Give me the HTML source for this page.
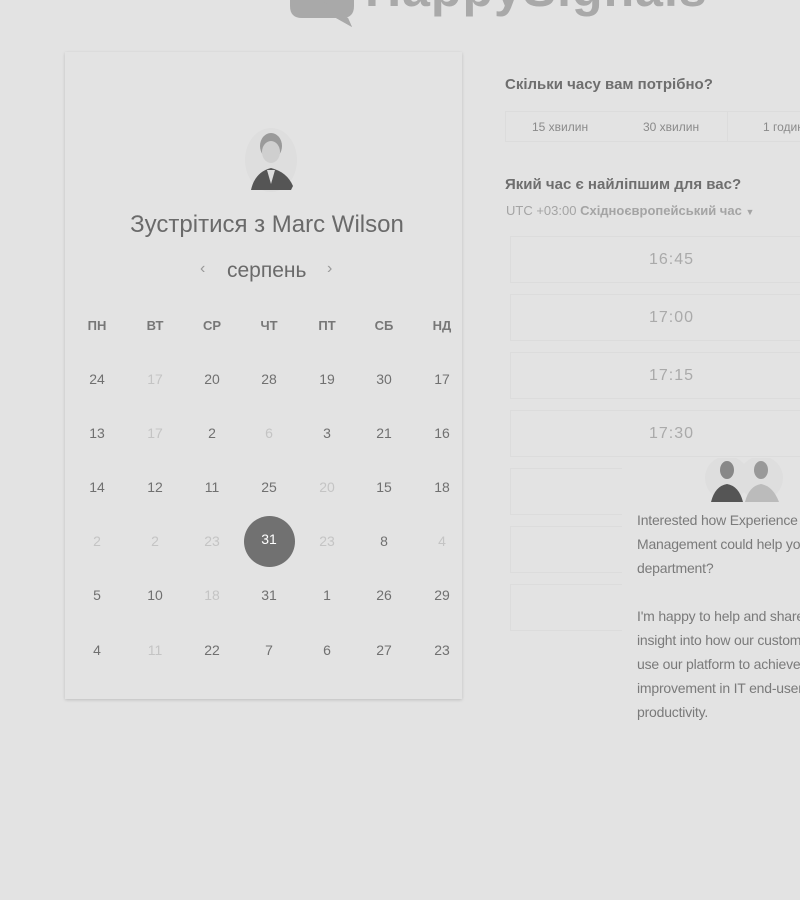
<!DOCTYPE html>
<html><head><meta charset="utf-8"><style>
body{margin:0;width:800px;height:900px;background:#e3e3e3;font-family:"Liberation Sans",sans-serif;position:relative;overflow:hidden}
.a{position:absolute}
.logo{left:365px;top:-40px;font-size:50px;font-weight:bold;color:#a9a9a9;letter-spacing:1px;white-space:nowrap}
.card{left:65px;top:52px;width:397px;height:647px;background:#e3e3e3;box-shadow:0 1px 3px rgba(0,0,0,.16)}
.day{position:absolute;width:40px;text-align:center;font-size:14px;color:#707070;transform:translateX(-20px)}
.dim{color:#c4c4c4}
.hd{font-weight:bold;font-size:13px;color:#777}
.slot{position:absolute;left:510px;width:300px;height:47px;border:1px solid #dcdcdc;border-right:none;box-sizing:border-box;text-align:center;line-height:46px;color:#aaa;font-size:16px;letter-spacing:1px}
.slot span{position:absolute;left:138px}
.pop{left:622px;top:458px;width:200px;height:300px;background:#e3e3e3}
.ptxt{left:637px;top:508px;width:200px;font-size:14px;line-height:24px;color:#7a7a7a;white-space:nowrap;letter-spacing:-0.2px}
</style></head><body>
<svg class="a" style="left:280px;top:-20px" width="80" height="50"><path d="M10 0 H62 Q74 0 74 12 V26 Q74 38 62 38 H68 L72 47 L56 38 H22 Q10 38 10 26 Z" fill="#a9a9a9"/><path d="M12 0 Q10 28 26 38 H56 L72 47 L68 38" fill="#a9a9a9"/></svg>
<div class="a logo">HappySignals</div>
<div class="a card"></div>
<svg class="a" style="left:239px;top:124px" width="64" height="68"><ellipse cx="32" cy="36" rx="26" ry="32" fill="#dedede"/><ellipse cx="32" cy="22" rx="11" ry="13" fill="#9a9a9a"/><ellipse cx="32" cy="28" rx="9" ry="11" fill="#cfcfcf"/><path d="M12 66 Q16 48 32 44 Q48 48 54 62 L52 66Z" fill="#555"/><path d="M28 46 L32 60 L36 46Z" fill="#ddd"/></svg>
<div class="a" style="left:65px;width:404px;top:211px;text-align:center;font-size:24px;color:#6a6a6a">Зустрітися з Marc Wilson</div>
<div class="a" style="left:200px;top:260px;font-size:16px;color:#999">‹</div>
<div class="a" style="left:227px;top:259px;font-size:21px;color:#6a6a6a">серпень</div>
<div class="a" style="left:327px;top:260px;font-size:16px;color:#999">›</div>
<div class="a" style="left:244px;top:516px;width:51px;height:51px;border-radius:50%;background:#717171"></div>
<div id="cal"></div>
<div class="a" style="left:505px;top:76px;font-size:15px;font-weight:bold;color:#6e6e6e">Скільки часу вам потрібно?</div>
<div class="a" style="left:505px;top:111px;width:310px;height:31px;border:1px solid #dcdcdc;box-sizing:border-box"></div>
<div class="a" style="left:727px;top:111px;width:1px;height:31px;background:#dcdcdc"></div>
<div class="a" style="left:532px;top:120px;font-size:12px;color:#8a8a8a">15 хвилин</div>
<div class="a" style="left:643px;top:120px;font-size:12px;color:#8a8a8a">30 хвилин</div>
<div class="a" style="left:763px;top:120px;font-size:12px;color:#8a8a8a;white-space:nowrap">1 година</div>
<div class="a" style="left:505px;top:176px;font-size:15px;font-weight:bold;color:#6e6e6e">Який час є найліпшим для вас?</div>
<div class="a" style="left:506px;top:203px;font-size:13px;color:#a4a4a4;white-space:nowrap">UTC +03:00 <b>Східноєвропейський час</b> <span style="font-size:9px">▼</span></div>
<div class="slot" style="top:236px"><span>16:45</span></div>
<div class="slot" style="top:294px"><span>17:00</span></div>
<div class="slot" style="top:352px"><span>17:15</span></div>
<div class="slot" style="top:410px"><span>17:30</span></div>
<div class="slot" style="top:468px"></div>
<div class="slot" style="top:526px"></div>
<div class="slot" style="top:584px"></div>
<div class="a pop"></div>
<svg class="a" style="left:705px;top:458px" width="80" height="46"><circle cx="22" cy="20" r="22" fill="#dedede"/><circle cx="56" cy="20" r="22" fill="#dedede"/><ellipse cx="22" cy="12" rx="7" ry="9" fill="#888"/><path d="M6 44 Q10 28 22 26 Q34 28 38 44Z" fill="#555"/><ellipse cx="56" cy="12" rx="7" ry="9" fill="#999"/><path d="M40 44 Q44 28 56 26 Q68 28 74 44Z" fill="#bbb"/></svg>
<div class="a ptxt">Interested how Experience<br>Management could help your<br>department?<br><br>I'm happy to help and share<br>insight into how our customers<br>use our platform to achieve<br>improvement in IT end-user<br>productivity.</div>
<script>
var xs=[97,155,212,269,327,384,442],ys=[379,433,487,541,595,650];
var h=["ПН","ВТ","СР","ЧТ","ПТ","СБ","НД"];
var d=[["24","17d","20","28","19","30","17"],["13","17d","2","6d","3","21","16"],["14","12","11","25","20d","15","18"],["2d","2d","23d","31s","23d","8","4d"],["5","10","18d","31","1","26","29"],["4","11d","22","7","6","27","23"]];
var o="";
h.forEach(function(t,i){o+='<div class="day hd" style="left:'+xs[i]+'px;top:318px">'+t+'</div>'});
d.forEach(function(r,j){r.forEach(function(t,i){var c="day",s="";if(t.slice(-1)=="d"){c+=" dim";t=t.slice(0,-1)}if(t.slice(-1)=="s"){t=t.slice(0,-1);s="color:#fff;"}o+='<div class="'+c+'" style="'+s+'left:'+xs[i]+'px;top:'+(ys[j]-8-(s?2:0))+'px">'+t+'</div>'})});
document.getElementById("cal").innerHTML=o;
</script>
</body></html>
